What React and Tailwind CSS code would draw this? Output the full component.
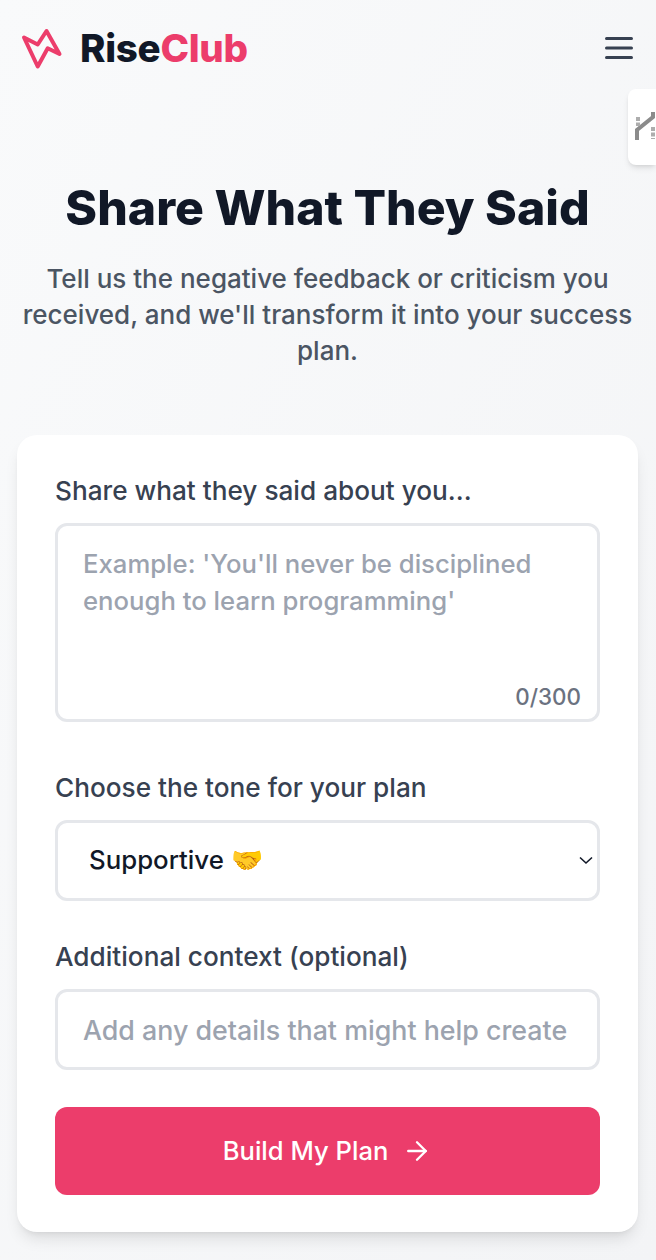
import { ArrowRight } from "lucide-react";

function Logo() {
  return (
    <div className="flex items-center gap-[16px]">
      <svg width="44" height="44" viewBox="0 0 44 44" fill="none" stroke="#ec3d6b" strokeWidth="4" strokeLinejoin="round" strokeLinecap="round">
        <path d="M4 11.5 L17.7 18.5 L26.5 5 L39.5 28 L27.7 22.3 L17.7 40.5 Z" />
      </svg>
      <div className="text-[38.5px] leading-none font-extrabold tracking-[-0.3px]">
        <span className="text-[#111827]">Rise</span>
        <span className="text-[#ec3d6b]">Club</span>
      </div>
    </div>
  );
}

function MenuIcon() {
  return (
    <svg width="30" height="24" viewBox="0 0 30 24" fill="none" stroke="#374151" strokeWidth="3" strokeLinecap="round">
      <path d="M2.5 2.5 H27.5 M2.5 12 H27.5 M2.5 21.5 H27.5" />
    </svg>
  );
}

function Field({ label, children }) {
  return (
    <div>
      <label className="block text-[26.2px] leading-[32px] font-medium text-[#374151] mb-[16px]">{label}</label>
      {children}
    </div>
  );
}

export default function App() {
  return (
    <div className="relative h-[1260px] overflow-hidden bg-gradient-to-br from-[#f9fafb] to-[#f3f4f6] font-['Inter',sans-serif]">
      <header className="flex items-center justify-between pl-[20px] pr-[22px] h-[96px]">
        <Logo />
        <MenuIcon />
      </header>

      <div className="absolute right-0 top-[89px] w-[28px] h-[76px] overflow-hidden bg-white rounded-l-lg shadow-md">
        <svg width="28" height="76" viewBox="0 0 28 76" fill="none" stroke="#8b8b8b" strokeWidth="4">
          <path d="M9 51 V41 L25 28 V23" />
          <path d="M10 28 V37" strokeDasharray="4 1.5" stroke="#adadad" />
          <path d="M25 38 V50" strokeDasharray="4 1.5" stroke="#adadad" />
        </svg>
      </div>

      <main className="pl-[17px] pr-[18px]">
        <h1 className="mt-[84px] text-center text-[48.2px] leading-[56px] font-extrabold text-[#111827]">Share What They Said</h1>
        <p className="mt-[25px] text-center text-[26px] leading-[36px] font-[450] text-[#4b5563]">
          Tell us the negative feedback or criticism you received, and we'll transform it into your success plan.
        </p>

        <form className="mt-[66px] h-[797px] rounded-[20px] bg-white px-[38px] pt-[40px] shadow-lg">
          <Field label="Share what they said about you...">
            <div className="relative">
              <textarea
                rows={3}
                maxLength={300}
                placeholder="Example: 'You'll never be disciplined enough to learn programming'"
                className="block h-[199px] w-full resize-none rounded-xl border-[3px] border-[#e5e7eb] px-[25px] py-[20px] text-[25.7px] leading-[36.5px] font-[450] outline-none placeholder:text-[#9ca3af]"
              />
              <span className="absolute right-[19px] bottom-[11px] text-[22.4px] leading-[28px] font-medium text-[#6b7280]">0/300</span>
            </div>
          </Field>

          <div className="mt-[50px]">
            <Field label="Choose the tone for your plan">
              <div className="relative">
                <select className="block h-[81px] w-full appearance-none rounded-xl border-[3px] border-[#e5e7eb] bg-white pl-[31px] text-[25.8px] font-medium text-[#111827] outline-none">
                  <option>Supportive 🤝</option>
                  <option>Tough Love 💪</option>
                  <option>Funny 😄</option>
                </select>
                <svg width="14" height="9" viewBox="0 0 14 9" fill="none" stroke="#111827" strokeWidth="1.6" className="pointer-events-none absolute right-[7px] top-[36px]">
                  <path d="M1 1.5 L7 7 L13 1.5" />
                </svg>
              </div>
            </Field>
          </div>

          <div className="mt-[40px]">
            <Field label="Additional context (optional)">
              <input
                placeholder="Add any details that might help create"
                className="block h-[81px] w-full rounded-xl border-[3px] border-[#e5e7eb] px-[25px] text-[26.8px] font-[450] outline-none placeholder:text-[#9ca3af]"
              />
            </Field>
          </div>

          <button type="button" className="mt-[37px] flex h-[88px] w-full items-center justify-center gap-[14px] rounded-xl bg-[#ec3d6b] text-[25.6px] font-medium text-white">
            Build My Plan
            <ArrowRight size={30} strokeWidth={1.9} />
          </button>
        </form>
      </main>
    </div>
  );
}
